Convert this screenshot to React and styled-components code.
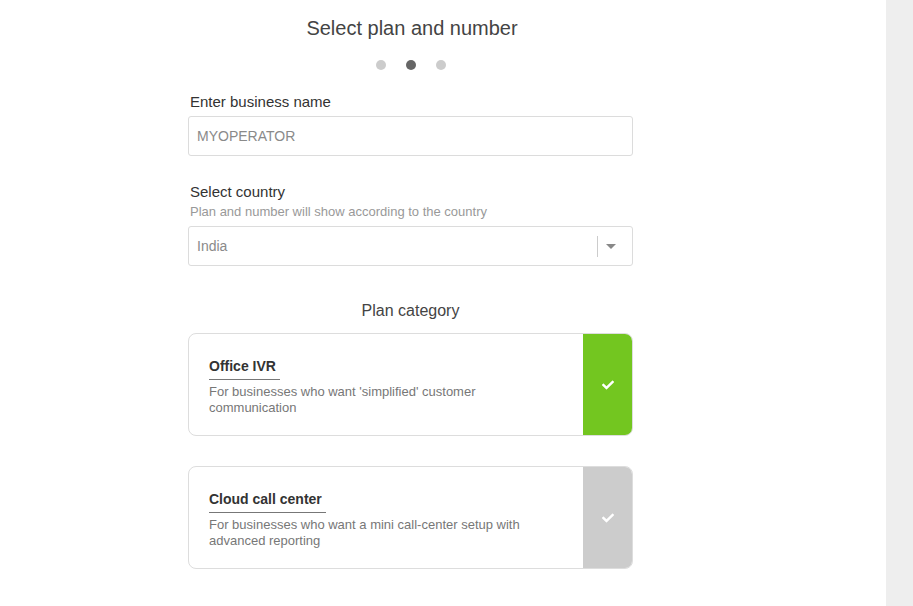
import React from "react";
import styled, { createGlobalStyle } from "styled-components";
import { FaCheck } from "react-icons/fa";

const GlobalStyle = createGlobalStyle`
  html, body {
    margin: 0;
    padding: 0;
    background: #ffffff;
    font-family: "Liberation Sans", Arial, sans-serif;
  }
`;

const Page = styled.div`
  display: flex;
  width: 913px;
  height: 606px;
  overflow: hidden;
`;

const Main = styled.div`
  flex: 1;
  background: #fff;
`;

const Sidebar = styled.div`
  width: 27px;
  background: #eeeeee;
`;

const Column = styled.div`
  width: 445px;
  margin-left: 188px;
  display: flex;
  flex-direction: column;
`;

const Title = styled.h1`
  margin: 16px 0 0;
  font-size: 20px;
  line-height: 24px;
  font-weight: 400;
  color: #444;
  text-align: center;
  padding-left: 3px;
`;

const Dots = styled.div`
  display: flex;
  justify-content: center;
  gap: 20px;
  margin-top: 20px;
  padding-left: 1px;
`;

const Dot = styled.span`
  width: 10px;
  height: 10px;
  border-radius: 50%;
  background: ${(p) => (p.$active ? "#666" : "#ccc")};
`;

const Field = styled.div`
  display: flex;
  flex-direction: column;
  margin-top: ${(p) => p.$top || 0}px;
`;

const Label = styled.label`
  font-size: 15px;
  line-height: 18px;
  color: #333;
  padding-left: 2px;
`;

const Hint = styled.div`
  font-size: 13px;
  line-height: 15px;
  color: #999;
  padding-left: 2px;
  margin-top: 3px;
`;

const Input = styled.div`
  box-sizing: border-box;
  height: 40px;
  margin-top: ${(p) => p.$gap}px;
  border: 1px solid #dcdcdc;
  border-radius: 3px;
  display: flex;
  align-items: center;
  padding-left: 8px;
  font-size: 14px;
  color: #8a8a8a;
`;

const SelectValue = styled.span`
  flex: 1;
`;

const Divider = styled.span`
  width: 1px;
  height: 21px;
  background: #ccc;
`;

const Arrow = styled.span`
  width: 0;
  height: 0;
  margin: 0 16px 0 8px;
  border-left: 5px solid transparent;
  border-right: 5px solid transparent;
  border-top: 5px solid #888;
`;

const Section = styled.div`
  margin-top: 36px;
  font-size: 16px;
  line-height: 18px;
  color: #444;
  text-align: center;
`;

const Cards = styled.div`
  display: flex;
  flex-direction: column;
  gap: 30px;
  margin-top: 13px;
`;

const Card = styled.div`
  display: flex;
  box-sizing: border-box;
  height: 103px;
  border: 1px solid #dddddd;
  border-radius: 8px;
  overflow: hidden;
`;

const CardBody = styled.div`
  flex: 1;
  padding: 23px 20px 0;
`;

const CardTitle = styled.div`
  display: inline-block;
  font-size: 14px;
  line-height: 17px;
  font-weight: 700;
  color: #333;
  padding: 0 4px 4px 0;
  border-bottom: 1px solid #777;
`;

const CardDesc = styled.div`
  margin-top: 4px;
  max-width: 335px;
  font-size: 13px;
  line-height: 16px;
  color: #777;
`;

const CheckCol = styled.div`
  width: 50px;
  display: flex;
  align-items: center;
  justify-content: center;
  background: ${(p) => (p.$selected ? "#73c620" : "#cccccc")};
  color: #fff;
  margin: -1px -1px -1px 0;
`;

const plans = [
  {
    name: "Office IVR",
    desc: "For businesses who want 'simplified' customer communication",
    selected: true,
  },
  {
    name: "Cloud call center",
    desc: "For businesses who want a mini call-center setup with advanced reporting",
    selected: false,
  },
];

export default function App() {
  return (
    <>
      <GlobalStyle />
      <Page>
        <Main>
          <Column>
            <Title>Select plan and number</Title>
            <Dots>
              <Dot />
              <Dot $active />
              <Dot />
            </Dots>

            <Field $top={23}>
              <Label>Enter business name</Label>
              <Input $gap={5}>MYOPERATOR</Input>
            </Field>

            <Field $top={27}>
              <Label>Select country</Label>
              <Hint>Plan and number will show according to the country</Hint>
              <Input $gap={7}>
                <SelectValue>India</SelectValue>
                <Divider />
                <Arrow />
              </Input>
            </Field>

            <Section>Plan category</Section>

            <Cards>
              {plans.map((p) => (
                <Card key={p.name}>
                  <CardBody>
                    <CardTitle>{p.name}</CardTitle>
                    <CardDesc>{p.desc}</CardDesc>
                  </CardBody>
                  <CheckCol $selected={p.selected}>
                    <FaCheck size={12} />
                  </CheckCol>
                </Card>
              ))}
            </Cards>
          </Column>
        </Main>
        <Sidebar />
      </Page>
    </>
  );
}
